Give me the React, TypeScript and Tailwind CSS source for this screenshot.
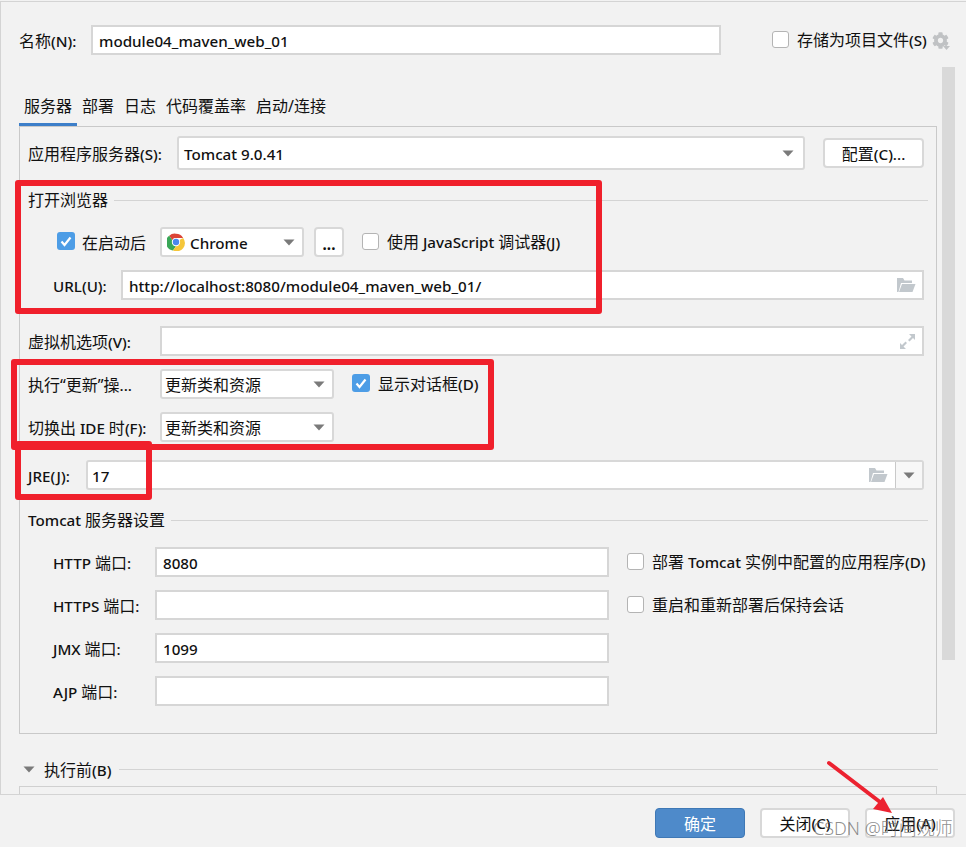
import { FaCog } from "react-icons/fa";
import type { ReactNode } from "react";

const CJK = /([\u2E80-\u9FFF\u201C\u201D\uFF00-\uFFEF]+)/;

function T({ children }: { children: string }) {
  return (
    <>
      {children.split(CJK).map((p, i) =>
        CJK.test(p) ? (
          <span key={i} className="font-normal text-[16px]">
            {p}
          </span>
        ) : (
          <span key={i}>{p}</span>
        )
      )}
    </>
  );
}

function Label({ w = "", children }: { w?: string; children: string }) {
  return (
    <span className={`shrink-0 whitespace-nowrap pt-[2px] ${w}`}>
      <T>{children}</T>
    </span>
  );
}

function Caret({ className = "" }: { className?: string }) {
  return (
    <svg width="12" height="7" viewBox="0 0 12 7" className={className}>
      <path d="M0.5 0.5h11L6 6.5z" fill="#7a7a7a" />
    </svg>
  );
}

function Folder() {
  return (
    <svg width="20" height="14" viewBox="0 0 20 14">
      <path d="M1 14V0h6l1.5 2.5H16V5H5L2.5 14z" fill="#c2c8cd" />
      <path d="M6 6h13.5L16.5 14H3z" fill="#c2c8cd" />
    </svg>
  );
}

function Expand() {
  return (
    <svg width="17" height="17" viewBox="0 0 17 17">
      <path d="M10 1h6v6l-2-2-3.5 3.5-1.5-1.5L12.500 3.500z" fill="#c2c8cd" />
      <path d="M7 16H1v-6l2 2 3.500-3.500 1.500 1.500L4.500 13.500z" fill="#c2c8cd" />
    </svg>
  );
}

function Chrome() {
  return (
    <svg width="18" height="18" viewBox="0 0 48 48">
      <path d="M24 2a22 22 0 0 1 19 11H24a11 11 0 0 0-10 6.500L6 7a22 22 0 0 1 18-5z" fill="#db4437" />
      <path d="M6 7l8 12.500A11 11 0 0 0 24 35l-8 11.500A22 22 0 0 1 6 7z" fill="#3aa757" />
      <path d="M43 13a22 22 0 0 1-27 33.500L24 35a11 11 0 0 0 9-16.500z" fill="#f5c63a" />
      <circle cx="24" cy="24" r="11" fill="#ffffff" />
      <circle cx="24" cy="24" r="8.500" fill="#4a87ee" />
    </svg>
  );
}

function Check({ on = false }: { on?: boolean }) {
  return on ? (
    <span className="mb-[2px] flex h-[18px] w-[18px] shrink-0 items-center justify-center rounded-[3px] bg-[#4d9de6]">
      <svg width="12" height="11" viewBox="0 0 12 11">
        <path d="M1.500 5.500 4.500 9l6-7.500" fill="none" stroke="#ffffff" strokeWidth="2.200" />
      </svg>
    </span>
  ) : (
    <span className="mb-[2px] block h-[17px] w-[17px] shrink-0 rounded-[3px] border border-[#b4b4b4] bg-white" />
  );
}

function Input({ w, children, right }: { w: string; children?: ReactNode; right?: ReactNode }) {
  return (
    <div className={`flex h-[30px] shrink-0 items-center justify-between border-2 border-[#d6d6d6] bg-white pl-[6px] pr-[6px] ${w}`}>
      <span className="whitespace-nowrap pt-[2px]">{children}</span>
      {right}
    </div>
  );
}

function Select({ children, className }: { children: ReactNode; className: string }) {
  return (
    <div className={`flex shrink-0 items-center justify-between rounded-[3px] border-2 border-[#d8d8d8] bg-white ${className}`}>
      {children}
    </div>
  );
}

function RefreshSelect() {
  return (
    <Select className="h-[30px] w-[174px] pl-[3px] pr-[7px]">
      <span className="pt-[2px] text-[16px] font-normal">更新类和资源</span>
      <Caret />
    </Select>
  );
}

function Group({ title }: { title: string }) {
  return (
    <div className="-mr-[4px] flex h-5 items-center gap-[6px]">
      <span className="whitespace-nowrap"><T>{title}</T></span>
      <span className="h-px flex-1 bg-[#d4d4d4]" />
    </div>
  );
}

function Port({ label, value, extra }: { label: string; value?: string; extra?: ReactNode }) {
  return (
    <div className="mt-[13px] flex h-[30px] items-center pl-[25px] first:mt-[17px]">
      <Label w="w-[102px]">{label}</Label>
      <Input w="w-[454px]">{value}</Input>
      {extra}
    </div>
  );
}

function Btn({ children }: { children: string }) {
  return (
    <div className="flex h-[30px] w-[90px] items-center justify-center rounded-[4px] border-2 border-[#d8d8d8] bg-white pt-[2px]">
      <T>{children}</T>
    </div>
  );
}

export default function App() {
  return (
    <div
      className="relative h-[847px] w-[966px] overflow-hidden bg-[#f2f2f2] pt-px text-[15.2px] font-medium text-[#111111]"
      style={{ fontFamily: '"Noto Sans", "Noto Sans CJK SC", sans-serif' }}
    >
      <div className="flex h-[793px] flex-col overflow-hidden border-l border-t border-[#d4d4d4]">
        <div className="flex h-[53px] shrink-0 items-end pl-[18px]">
          <div className="flex items-center">
            <Label w="w-[72px]">名称(N):</Label>
            <Input w="w-[630px]">module04_maven_web_01</Input>
            <span className="ml-[51px]"><Check /></span>
            <span className="ml-2 whitespace-nowrap"><T>存储为项目文件(S)</T></span>
            <span className="relative ml-[5px] text-[#c0c2c4]">
              <FaCog size={17} />
              <svg width="7" height="4" viewBox="0 0 7 4" className="absolute -bottom-[1px] -right-[1px]">
                <path d="M0 0h7L3.500 4z" fill="#c0c2c4" />
              </svg>
            </span>
          </div>
        </div>

        <div className="mt-[27px] flex h-[45px] shrink-0 items-end pl-[18px]">
          {[
            ["服务器", "w-[58px] border-[#3d7fc9]"],
            ["部署", "w-[42px] border-transparent"],
            ["日志", "w-[42px] border-transparent"],
            ["代码覆盖率", "w-[90px] border-transparent"],
            ["启动/连接", "ml-[2px] w-[76px] border-transparent"],
          ].map(([t, c]) => (
            <div key={t} className={`flex h-[45px] items-center justify-center border-b-4 pt-[7px] ${c}`}>
              <span className="whitespace-nowrap text-[16px] font-normal">{t}</span>
            </div>
          ))}
        </div>

        <div className="-mt-px ml-[18px] h-[608px] w-[918px] shrink-0 border border-[#c9c9c9] pl-2 pr-3">
          <div className="mt-[9px] flex h-[34px] items-center">
            <Label w="w-[149px]">应用程序服务器(S):</Label>
            <Select className="h-[34px] w-[628px] pl-[5px] pr-[9px]">
              <span className="pt-[2px]">Tomcat 9.0.41</span>
              <Caret />
            </Select>
            <div className="ml-[18px] flex h-[30px] w-[101px] items-center justify-center rounded-[4px] border-2 border-[#d8d8d8] bg-white pt-[2px]">
              <T>配置(C)...</T>
            </div>
          </div>

          <div className="mt-[20px]"><Group title="打开浏览器" /></div>

          <div className="mt-[17px] flex h-[30px] items-center pl-[29px]">
            <Check on />
            <span className="ml-[7px] w-[78px] pt-[2px] text-[16px] font-normal">在启动后</span>
            <Select className="h-[30px] w-[144px] pl-[5px] pr-[7px]">
              <span className="flex items-center gap-[5px]"><Chrome /><span className="pt-[2px]">Chrome</span></span>
              <Caret />
            </Select>
            <div className="ml-[10px] flex h-[30px] w-[30px] items-center justify-center rounded-[4px] border-2 border-[#d8d8d8] bg-white pt-1 font-bold">...</div>
            <span className="ml-[18px]"><Check /></span>
            <span className="ml-2 whitespace-nowrap"><T>使用 JavaScript 调试器(J)</T></span>
          </div>

          <div className="mt-[13px] flex h-[30px] items-center pl-[25px]">
            <Label w="w-[68px]">URL(U):</Label>
            <Input w="w-[803px]" right={<Folder />}>http://localhost:8080/module04_maven_web_01/</Input>
          </div>

          <div className="mt-[26px] flex h-[30px] items-center">
            <Label w="w-[132px]">虚拟机选项(V):</Label>
            <Input w="w-[764px]" right={<Expand />} />
          </div>

          <div className="mt-[13px] flex h-[30px] items-center">
            <Label w="w-[132px]">执行“更新”操...</Label>
            <RefreshSelect />
            <span className="ml-[18px]"><Check on /></span>
            <span className="ml-2 whitespace-nowrap"><T>显示对话框(D)</T></span>
          </div>

          <div className="mt-[13px] flex h-[30px] items-center">
            <Label w="w-[132px]">切换出 IDE 时(F):</Label>
            <RefreshSelect />
          </div>

          <div className="mt-[18px] flex h-[30px] items-center">
            <Label w="w-[58px]">JRE(J):</Label>
            <div className="flex h-[30px] w-[838px] items-center rounded-[3px] border-2 border-[#d8d8d8] bg-white">
              <span className="flex-1 pl-[4px] pt-[2px]">17</span>
              <span className="mr-[7px]"><Folder /></span>
              <span className="flex h-full w-[27px] items-center justify-center border-l border-[#c9c9c9] bg-[#f7f7f7]"><Caret /></span>
            </div>
          </div>

          <div className="mt-[20px]"><Group title="Tomcat 服务器设置" /></div>

          <div className="flex flex-col">
            <Port
              label="HTTP 端口:"
              value="8080"
              extra={
                <>
                  <span className="ml-[18px]"><Check /></span>
                  <span className="ml-2 whitespace-nowrap"><T>部署 Tomcat 实例中配置的应用程序(D)</T></span>
                </>
              }
            />
            <Port
              label="HTTPS 端口:"
              extra={
                <>
                  <span className="ml-[18px]"><Check /></span>
                  <span className="ml-2 whitespace-nowrap"><T>重启和重新部署后保持会话</T></span>
                </>
              }
            />
            <Port label="JMX 端口:" value="1099" />
            <Port label="AJP 端口:" />
          </div>
        </div>

        <div className="mt-[25px] flex h-5 shrink-0 items-center pl-[22px]">
          <Caret />
          <span className="ml-[9px] whitespace-nowrap pt-[2px]"><T>执行前(B)</T></span>
          <span className="ml-2 mr-[28px] h-px flex-1 bg-[#d4d4d4]" />
        </div>
        <div className="ml-[18px] mt-[7px] h-[20px] w-[918px] shrink-0 border-l border-r border-t border-[#d0d0d0]" />
      </div>

      <div className="flex h-[53px] items-center justify-end gap-[15px] border-t border-[#d4d4d4] pr-[11px] pt-[3px]">
        <div className="flex h-[30px] w-[90px] items-center justify-center rounded-[4px] border border-[#3f78b5] bg-[#4e8aca] pt-[2px] text-[16px] font-normal text-white">
          确定
        </div>
        <Btn>关闭(C)</Btn>
        <Btn>应用(A)</Btn>
      </div>

      <div className="absolute right-[11px] top-[67px] h-[593px] w-[13px] bg-[#d9d9d9]" />

      <div className="absolute left-[15px] top-[180px] h-[134px] w-[587px] rounded-[3px] border-[6px] border-[#f0202c]" />
      <div className="absolute left-[11px] top-[359px] h-[91px] w-[483px] rounded-[3px] border-[6px] border-[#f0202c]" />
      <div className="absolute left-[15px] top-[441px] h-[59px] w-[137px] rounded-[3px] border-[6px] border-[#f0202c]" />

      <svg width="80" height="60" viewBox="0 0 80 60" className="absolute left-[822px] top-[758px]">
        <path d="M7 5 58 44" stroke="#ec2230" strokeWidth="4" strokeLinecap="round" />
        <path d="M70 55 61 39 51 51z" fill="#ec2230" />
      </svg>

      <div className="absolute left-[813px] top-[815px] whitespace-nowrap text-[18px] font-light text-[#707070]/80">
        CSDN @时间观师
      </div>
    </div>
  );
}
